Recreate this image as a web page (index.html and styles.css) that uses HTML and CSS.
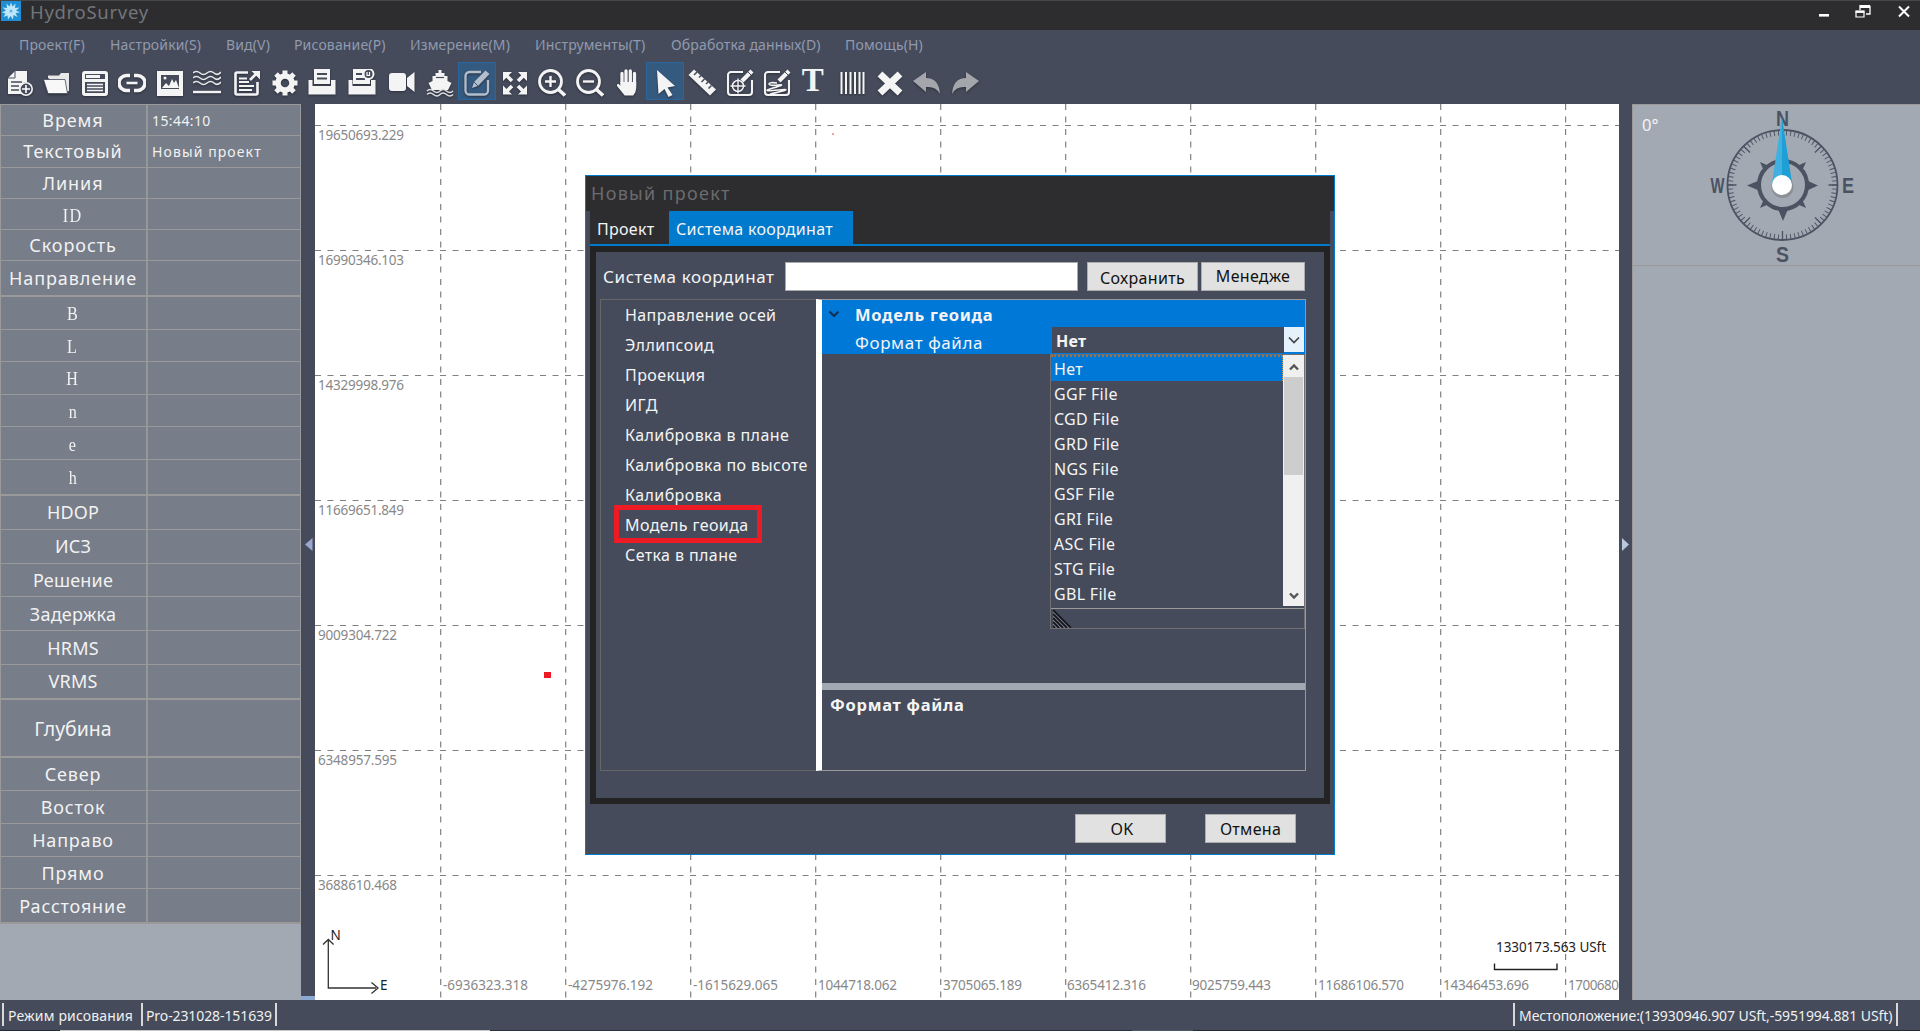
FILE: index.html
```html
<!DOCTYPE html>
<html lang="ru">
<head>
    <meta charset="UTF-8">
    <title>HydroSurvey</title>
    <link rel="stylesheet" href="styles.css">
</head>
<body>
<div class="app">

    <!-- Заголовок окна -->
    <header class="titlebar">
        <svg class="logo" viewBox="0 0 20 20">
            <rect width="20" height="20" fill="#1e8fd5"/>
            <path d="M10 1.500l1.500 4 3-3-.5 4.500 4.500-.5-3.500 3 4 2-4.500.5 2 4-4-2-.5 4.500-2.500-3.500-2.500 3.500-.5-4-4 1.500 2-3.500L1 11.500l4-2L1.500 6.500 6 7 5.500 2.500l3 3z" fill="#bfe6f9"/>
            <circle cx="10" cy="10" r="1.500" fill="#5bb8ea"/>
        </svg>
        <h1>HydroSurvey</h1>
        <svg class="win-btns" viewBox="0 0 110 30">
            <path d="M9 16.300h10" stroke="#fff" stroke-width="2.600"/>
            <path d="M50 7.500h10v7.500h-4M50 6v5" fill="none" stroke="#fff" stroke-width="1.300"/>
            <path d="M50 7.500h10" stroke="#fff" stroke-width="3"/>
            <path d="M46 13h8v5h-8z" fill="#2d2d30" stroke="#fff" stroke-width="1.200"/>
            <path d="M45.400 12.600h9.200" stroke="#fff" stroke-width="2.400"/>
            <path d="M89 7.500l10 10M99 7.500l-10 10" stroke="#fff" stroke-width="2"/>
        </svg>
    </header>

    <nav class="menu">
        <span class="m1">Проект(F)</span>
        <span class="m2">Настройки(S)</span>
        <span class="m3">Вид(V)</span>
        <span class="m4">Рисование(P)</span>
        <span class="m5">Измерение(M)</span>
        <span class="m6">Инструменты(T)</span>
        <span class="m7">Обработка данных(D)</span>
        <span class="m8">Помощь(H)</span>
    </nav>

    <!-- Панель инструментов -->
    <div class="toolbar">
        <span class="tool"><svg viewBox="0 0 28 28"><path d="M9 2h12v11a7 7 0 0 0-5 12H2V9z" fill="#f4f4f4"/><path d="M9 2v7H2" fill="none" stroke="#454b5b"/><path d="M5 13h11M5 17h8M5 21h8" stroke="#454b5b" stroke-width="1.5"/><circle cx="20" cy="20" r="6.2" fill="#454b5b" stroke="#f4f4f4" stroke-width="1.6"/><path d="M20 16v8M16 20h8" stroke="#fff" stroke-width="1.6"/></svg></span>
        <span class="tool"><svg viewBox="0 0 28 28"><path d="M5 9V6.500h11l2-2.500h8v18l-3 1z" fill="#e8e8e8"/><path d="M0.500 10.500h21.500l2.500 14H5z" fill="#f8f8f8" stroke="#454b5b" stroke-width=".8"/></svg></span>
        <span class="tool"><svg viewBox="0 0 28 28"><rect x="1" y="2" width="26" height="25" rx="3" fill="#f4f4f4"/><path d="M4 5h20v5H4zM4 13h20v11H4z" fill="#454b5b"/><path d="M5 6h14v3H5z" fill="#f4f4f4"/><path d="M6 15.500h16M6 18.500h16M6 21.500h16" stroke="#f4f4f4" stroke-width="1.700"/></svg></span>
        <span class="tool"><svg viewBox="0 0 28 28"><path d="M12 6.500H8.500a7.500 7.500 0 0 0 0 15H12M16 6.500h3.500a7.500 7.500 0 0 1 0 15H16" fill="none" stroke="#f4f4f4" stroke-width="3.600"/><path d="M8.500 14h11" stroke="#f4f4f4" stroke-width="2.600"/></svg></span>
        <span class="tool"><svg viewBox="0 0 28 28"><path d="M1 2h26v25H1z" fill="#f4f4f4"/><path d="M5 6h18v14H5z" fill="#454b5b"/><path d="M6 19l4-5 3 3 3-7 2 4 2-3 3 8z" fill="#f4f4f4"/><circle cx="9" cy="9" r="1.500" fill="#f4f4f4"/></svg></span>
        <span class="tool"><svg viewBox="0 0 28 28"><path d="M0 4q3.500-3 7 0t7 0 7 0 7-1M0 9q3.500-3 7 0t7 0 7 0 7-1M0 14q3.500-3 7 0t7 0 7 0 7-1" fill="none" stroke="#e8e8e8" stroke-width="1.600"/><path d="M0 23h28" stroke="#f4f4f4" stroke-width="2.400"/></svg></span>
        <span class="tool gap"><svg viewBox="0 0 28 28"><path d="M15 3.500H4a1.500 1.500 0 0 0-1.500 1.500v19a1.500 1.500 0 0 0 1.500 1.500h19a1.500 1.500 0 0 0 1.500-1.500V13" fill="none" stroke="#f4f4f4" stroke-width="2.600"/><path d="M6 9.500h8M6 13h10M6 17h15M6 21h13" stroke="#f4f4f4" stroke-width="1.800"/><path d="M17 11l6-6" stroke="#f4f4f4" stroke-width="2.600"/><path d="M18.500 2H27v8.500z" fill="#f4f4f4"/></svg></span>
        <span class="tool"><svg viewBox="0 0 28 28"><circle cx="14" cy="14" r="7" fill="none" stroke="#f4f4f4" stroke-width="5.500"/><path d="M14 1.500v4M14 22.500v4M1.500 14h4M22.500 14h4M5 5l3 3M20 20l3 3M23 5l-3 3M8 20l-3 3" stroke="#f4f4f4" stroke-width="5"/></svg></span>
        <span class="tool"><svg viewBox="0 0 28 28"><path d="M6 0h16v15H6z" fill="#f4f4f4"/><path d="M9 5h10M9 9.500h10" stroke="#454b5b" stroke-width="1.800"/><path d="M0.500 11h4v6h18.500v-6h4.500v14.500H0.500z" fill="#f4f4f4"/></svg></span>
        <span class="tool gap"><svg viewBox="0 0 28 28"><path d="M5 0h13v9h4v6H5z" fill="#f4f4f4"/><path d="M8 5h6M8 10h9" stroke="#454b5b" stroke-width="1.800"/><path d="M0.500 11h4v6h18.500v-6h4.500v14.500H0.500z" fill="#f4f4f4"/><circle cx="20.500" cy="5" r="5" fill="#454b5b" stroke="#f4f4f4" stroke-width="2"/><path d="M19 3v3.500h2.500V3" fill="none" stroke="#fff" stroke-width="1.200"/></svg></span>
        <span class="tool gap"><svg viewBox="0 0 28 28"><rect x="1" y="4" width="17" height="18" rx="3" fill="#f4f4f4"/><path d="M26.500 3v20l-7.500-6V9z" fill="#f4f4f4"/></svg></span>
        <span class="tool"><svg viewBox="0 0 28 28"><path d="M12.500 1h3v3h3v3h3v5l4 2-3.500 7h-16L2.500 14l4-2V7h3V4h3z" fill="#f4f4f4"/><path d="M10 8.500h8" stroke="#454b5b" stroke-width="1.200"/><path d="M1 22q3-3 6.500 0t6.500 0 6.500 0 6.500 0M1 25.500q3-3 6.500 0t6.500 0 6.500 0 6.500 0" fill="none" stroke="#e0e0e0" stroke-width="1.500"/></svg></span>
        <span class="tool active edit"><svg viewBox="0 0 28 28"><path d="M18 3H6.500a4 4 0 0 0-4 4v14.500a4 4 0 0 0 4 4H21a4 4 0 0 0 4-4V11" fill="none" stroke="#b3bfcd" stroke-width="2.300"/><path d="M9 19l2-6L22.500 1.500l4 3.500L15 17z" fill="#b3bfcd"/><path d="M11 13l4 4" stroke="#355a80"/></svg></span>
        <span class="tool expand"><svg viewBox="0 0 28 28"><path d="M5 6l6 6M23 6l-6 6M5 23l6-6M23 23l-6-6" stroke="#f4f4f4" stroke-width="3.600"/><path d="M2 3h9l-9 9zM26 3h-9l9 9zM2 25.500h9l-9-9zM26 25.500h-9l9-9z" fill="#f4f4f4"/></svg></span>
        <span class="tool"><svg viewBox="0 0 28 28" fill="none" stroke="#f4f4f4"><circle cx="12.500" cy="12.500" r="11" stroke-width="2.800"/><path d="M20.500 20.500l6.500 6" stroke-width="3.600"/><path d="M12.500 7v11M7 12.500h11" stroke-width="2.400"/></svg></span>
        <span class="tool"><svg viewBox="0 0 28 28" fill="none" stroke="#f4f4f4"><circle cx="12.500" cy="12.500" r="11" stroke-width="2.800"/><path d="M20.500 20.500l6.500 6" stroke-width="3.600"/><path d="M7 12.500h11" stroke-width="2.400"/></svg></span>
        <span class="tool"><svg viewBox="0 0 28 28"><path d="M9 4.500v12M13 2v13M17.300 2v13M21.500 4.500v12" stroke="#f4f4f4" stroke-width="3.300" stroke-linecap="round"/><path d="M7.400 13h15.800v6q0 4-3 7.500h-8.500L4 17q-.5-2.500 1.500-2l2.500 2z" fill="#f4f4f4"/></svg></span>
        <span class="tool active"><svg viewBox="0 0 28 28"><path d="M6 1l18 16-7.500 1.500L21.500 26l-4 2-4-8-6 5z" fill="#f4f4f4"/></svg></span>
        <span class="tool"><svg viewBox="0 0 28 28"><path d="M6 0.500l22 20-6 6L0.500 6z" fill="#f4f4f4"/><path d="M9 3l-3 3M13 6.500l-2 2M16.500 10l-3 3M20 13l-2 2M23.500 16.500l-3 3" stroke="#454b5b" stroke-width="1.500"/></svg></span>
        <span class="tool"><svg viewBox="0 0 28 28" fill="none" stroke="#f4f4f4"><path d="M17 3H5a3 3 0 0 0-3 3v17a3 3 0 0 0 3 3h18a3 3 0 0 0 3-3V11" stroke-width="2.100"/><circle cx="12" cy="17" r="5.500" stroke-width="1.500"/><path d="M12 9.500v15M4.500 17h15" stroke-width="1.400"/><path d="M16 12l10-10" stroke-width="4.200"/><path d="M22 3l3 3" stroke="#454b5b"/></svg></span>
        <span class="tool"><svg viewBox="0 0 28 28" fill="none" stroke="#f4f4f4"><path d="M17 3H5a3 3 0 0 0-3 3v17a3 3 0 0 0 3 3h18a3 3 0 0 0 3-3V11" stroke-width="2.100"/><path d="M14 14q-8-1-8 1t9 1-5 3 5 2-8 4" stroke-width="1.600"/><path d="M16 12l10-10" stroke-width="4.200"/><path d="M22 3l3 3" stroke="#454b5b"/></svg></span>
        <span class="tool letter">T</span>
        <span class="tool"><svg viewBox="0 0 28 28"><path d="M3.500 3v22M8 3v22M12.500 3v22M17 3v22M21.500 3v22M25.500 3v22" stroke="#f4f4f4" stroke-width="2"/></svg></span>
        <span class="tool"><svg viewBox="0 0 28 28"><path d="M4 5l20 19M24 5L4 24" stroke="#f4f4f4" stroke-width="7"/></svg></span>
        <span class="tool"><svg viewBox="0 0 28 28"><path d="M0 12L13 3v6q13 0 14 16-4-8-14-7v5z" fill="#a4a6ac"/></svg></span>
        <span class="tool"><svg viewBox="0 0 28 28"><path d="M28 12L15 3v6Q2 9 1 25q4-8 14-7v5z" fill="#a4a6ac"/></svg></span>
    </div>

    <main class="workspace">
        <!-- Таблица параметров -->
        <aside class="params">
            <div class="group g-main">
                <div class="row"><b>Время</b><i class="time">15:44:10</i></div>
                <div class="row"><b>Текстовый</b><i class="wide">Новый проект</i></div>
                <div class="row"><b>Линия</b><i></i></div>
                <div class="row"><b><span class="serif">ID</span></b><i></i></div>
                <div class="row"><b>Скорость</b><i></i></div>
                <div class="row"><b>Направление</b><i></i></div>
            </div>
            <div class="group g-pos">
                <div class="row"><b><span class="serif">B</span></b><i></i></div>
                <div class="row"><b><span class="serif">L</span></b><i></i></div>
                <div class="row"><b><span class="serif">H</span></b><i></i></div>
                <div class="row"><b><span class="serif">n</span></b><i></i></div>
                <div class="row"><b><span class="serif">e</span></b><i></i></div>
                <div class="row"><b><span class="serif">h</span></b><i></i></div>
            </div>
            <div class="group g-quality">
                <div class="row"><b>HDOP</b><i></i></div>
                <div class="row"><b>ИСЗ</b><i></i></div>
                <div class="row"><b>Решение</b><i></i></div>
                <div class="row"><b>Задержка</b><i></i></div>
                <div class="row"><b>HRMS</b><i></i></div>
                <div class="row"><b>VRMS</b><i></i></div>
            </div>
            <div class="group g-depth">
                <div class="row"><b>Глубина</b><i></i></div>
            </div>
            <div class="group g-coords">
                <div class="row"><b>Север</b><i></i></div>
                <div class="row"><b>Восток</b><i></i></div>
                <div class="row"><b>Направо</b><i></i></div>
                <div class="row"><b>Прямо</b><i></i></div>
                <div class="row"><b>Расстояние</b><i></i></div>
            </div>
        </aside>

        <div class="splitter left"><svg viewBox="0 0 14 14"><path d="M11.500 0v13L4 6.500z" fill="#9aa6cc"/></svg></div>

        <!-- Карта -->
        <section class="map">
            <svg class="grid" viewBox="315 104 1304 896">
                <g stroke="#808080" stroke-width="1.200" stroke-dasharray="6 6.500">
                    <path d="M315 125.500h1304M315 250.500h1304M315 375.500h1304M315 500.500h1304M315 625.500h1304M315 750.500h1304M315 875.500h1304"/>
                    <path d="M440.700 104v896M565.700 104v896M690.700 104v896M815.700 104v896M940.700 104v896M1065.700 104v896M1190.700 104v896M1315.700 104v896M1440.700 104v896M1565.600 104v896"/>
                </g>
                <g class="coord">
                    <text x="318" y="140" textLength="86">19650693.229</text>
                    <text x="318" y="265" textLength="86">16990346.103</text>
                    <text x="318" y="390" textLength="86">14329998.976</text>
                    <text x="318" y="515" textLength="86">11669651.849</text>
                    <text x="318" y="640" textLength="79">9009304.722</text>
                    <text x="318" y="765" textLength="79">6348957.595</text>
                    <text x="318" y="890" textLength="79">3688610.468</text>
                    <text x="443" y="990" textLength="85">-6936323.318</text>
                    <text x="568" y="990" textLength="85">-4275976.192</text>
                    <text x="693" y="990" textLength="85">-1615629.065</text>
                    <text x="818" y="990" textLength="79">1044718.062</text>
                    <text x="943" y="990" textLength="79">3705065.189</text>
                    <text x="1067" y="990" textLength="79">6365412.316</text>
                    <text x="1192" y="990" textLength="79">9025759.443</text>
                    <text x="1318" y="990" textLength="86">11686106.570</text>
                    <text x="1443" y="990" textLength="86">14346453.696</text>
                    <text x="1568" y="990" textLength="51">1700680</text>
                </g>
                <path d="M328.300 940v48H376M323 944.500l5.300-5 5.300 5M371.500 982.500l6.500 5.500-6.500 5.500" fill="none" stroke="#333" stroke-width="1.300"/>
                <g class="axis">
                    <text x="330.500" y="940">N</text>
                    <text x="380" y="990">E</text>
                    <text x="1496" y="952" textLength="110">1330173.563 USft</text>
                </g>
                <path d="M1494.500 963.500v6h62.500v-6" fill="none" stroke="#222" stroke-width="1.400"/>
                <path d="M544 672h7v6h-7z" fill="#ed1c24"/>
                <path d="M832 133.500h2v1h-2z" fill="#f04040"/>
            </svg>

            <!-- Окно нового проекта -->
            <div class="dialog">
                <div class="dialog-title">Новый проект</div>
                <div class="tabs">
                    <span class="tab">Проект</span>
                    <span class="tab current">Система координат</span>
                </div>
                <div class="page">
                    <div class="system">
                        <label>Система координат</label>
                        <div class="field"></div>
                        <div class="btn save">Сохранить</div>
                        <div class="btn manage">Менедже</div>
                    </div>
                    <div class="panes">
                        <ul class="tree">
                            <li>Направление осей</li>
                            <li>Эллипсоид</li>
                            <li>Проекция</li>
                            <li>ИГД</li>
                            <li>Калибровка в плане</li>
                            <li>Калибровка по высоте</li>
                            <li>Калибровка</li>
                            <li class="marked">Модель геоида</li>
                            <li>Сетка в плане</li>
                        </ul>
                        <div class="props">
                            <div class="prop-head"><svg viewBox="0 0 12 8"><path d="M1.500 1.500L6 6l4.500-4.500" fill="none" stroke="#12304f" stroke-width="2"/></svg>Модель геоида</div>
                            <div class="prop-row">
                                <div class="prop-name">Формат файла</div>
                                <div class="prop-value">Нет</div>
                                <div class="combo"><svg viewBox="0 0 12 8"><path d="M1 1.500l5 5 5-5" fill="none" stroke="#444" stroke-width="1.700"/></svg></div>
                            </div>
                            <div class="prop-space"></div>
                            <div class="prop-help">Формат файла</div>
                            <div class="dropdown">
                                <div class="options">
                                    <div class="list">
                                        <div class="option selected">Нет</div>
                                        <div class="option">GGF File</div>
                                        <div class="option">CGD File</div>
                                        <div class="option">GRD File</div>
                                        <div class="option">NGS File</div>
                                        <div class="option">GSF File</div>
                                        <div class="option">GRI File</div>
                                        <div class="option">ASC File</div>
                                        <div class="option">STG File</div>
                                        <div class="option">GBL File</div>
                                    </div>
                                    <div class="scroll">
                                        <svg viewBox="0 0 12 8"><path d="M2 6.500L6 2.500l4 4" fill="none" stroke="#555" stroke-width="2.400"/></svg>
                                        <div class="thumb"></div>
                                        <svg viewBox="0 0 12 8"><path d="M2 1.500l4 4 4-4" fill="none" stroke="#555" stroke-width="2.400"/></svg>
                                    </div>
                                </div>
                                <div class="grip"><svg viewBox="0 0 19 19"><path d="M0 0L19 19H0z" fill="#777d8b"/><path d="M0 1l18 18M0 5l14 14M0 9l10 10M0 13l6 6M0 17l2 2" stroke="#14161c" stroke-width="1.800"/></svg></div>
                            </div>
                        </div>
                    </div>
                </div>
                <div class="dialog-btns">
                    <div class="btn ok">OK</div>
                    <div class="btn">Отмена</div>
                </div>
            </div>
        </section>

        <div class="splitter right"><svg viewBox="0 0 14 14"><path d="M3 0v13l7-6.500z" fill="#b9c6dc"/></svg></div>

        <!-- Компас -->
        <aside class="nav-panel">
            <div class="compass">
                <span class="angle">0°</span>
                <svg viewBox="1702 105 160 160">
                    <g fill="none" stroke="#4b5363">
                        <circle cx="1782.500" cy="185" r="55" stroke-width="1.800"/>
                        <circle cx="1782.500" cy="185" r="52" stroke-width="5" pathLength="360" stroke-dasharray="1 3.500" stroke-dashoffset=".5"/>
                        <path d="M1727.500 185h9M1828.500 185h9M1782.500 231v9M1743.600 146.100l6.400 6.400M1821.400 146.100l-6.400 6.400M1743.600 223.900l6.400-6.400M1821.400 223.900l-6.400-6.400" stroke-width="1.300"/>
                        <circle cx="1783" cy="185" r="24" stroke-width="4"/>
                    </g>
                    <path d="M1747 185.500l12-5v10zM1818 185.500l-11-5v10zM1783 221l-5-12h10zM1760 162l9 4-5 5zM1806 162l-9 4 5 5zM1760 208l9-4-5-5zM1806 208l-9-4 5-5z" fill="#4b5363"/>
                    <g class="cardinal">
                        <text x="1776" y="125.500" textLength="13" lengthAdjust="spacingAndGlyphs">N</text>
                        <text x="1776" y="261.500" textLength="13" lengthAdjust="spacingAndGlyphs">S</text>
                        <text x="1710.500" y="192.500" textLength="14" lengthAdjust="spacingAndGlyphs">W</text>
                        <text x="1842" y="192.500" textLength="12" lengthAdjust="spacingAndGlyphs">E</text>
                    </g>
                    <path d="M1782 117l-10 66h10z" fill="#3fb0e0"/>
                    <path d="M1782 117l10 66h-10z" fill="#1e9fd6"/>
                    <circle cx="1782.500" cy="187" r="11" fill="#555" opacity=".3"/>
                    <circle cx="1782" cy="185" r="10" fill="#fff"/>
                </svg>
            </div>
        </aside>
    </main>

    <footer class="status">
        <span class="mode">Режим рисования</span>
        <span class="project">Pro-231028-151639</span>
        <span class="place">Местоположение:(13930946.907 USft,-5951994.881 USft)</span>
    </footer>
    <div class="taskbar"></div>
</div>
</body>
</html>
```
FILE: styles.css
```css
* {
    box-sizing: border-box;
}

body {
    margin: 0;
    background: #454b5b;
    font-family: "Noto Sans", "Open Sans", sans-serif;
    overflow: hidden;
}

.app {
    display: flex;
    flex-direction: column;
    width: 1920px;
    height: 1031px;
}

svg {
    display: block;
    flex: none;
}

/* заголовок */
.titlebar {
    display: flex;
    height: 30px;
    background: #2d2d30;
    border-top: 1px solid #46474b;
}

.logo {
    width: 20px;
    height: 20px;
    margin-left: 1px;
}

.titlebar h1 {
    margin: 0 auto 0 9px;
    color: #73757a;
    font-size: 18.5px;
    font-weight: normal;
    letter-spacing: .7px;
    line-height: 22px;
}

.win-btns {
    width: 110px;
    height: 30px;
    margin-top: -2px;
}

.menu {
    display: flex;
    height: 32px;
    color: #919aae;
    font-size: 14px;
    letter-spacing: .15px;
    line-height: 29px;
    padding-left: 19px;
    white-space: nowrap;
}

.m1 { width: 91px; }
.m2 { width: 116px; }
.m3 { width: 68px; }
.m4 { width: 116px; }
.m5 { width: 125px; }
.m6 { width: 136px; }
.m7 { width: 174px; }

.toolbar {
    display: flex;
    height: 42px;
    padding-left: 1px;
}

.tool {
    display: flex;
    flex: none;
    align-items: center;
    justify-content: center;
    width: 37.5px;
    height: 38px;
    padding-top: 3px;
}

.tool svg {
    width: 28px;
    height: 28px;
    filter: drop-shadow(0 1px 1px #2a2e39);
}

.tool.gap {
    margin-left: 2.5px;
}

.tool.edit {
    margin-left: -.5px;
}

.tool.expand {
    margin-left: .5px;
}

.tool.active {
    background: #355a80;
    border: 1px solid #2a659c;
}

.tool.letter {
    color: #f4f4f4;
    font: bold 33px/34px "Liberation Serif", serif;
    padding: 0 4px 2px 0;
}

.workspace {
    display: flex;
    height: 896px;
}

/* таблица слева */
.params {
    width: 301px;
    background: #a3a9b3;
    border-top: 1px solid #999;
}

.group {
    border-bottom: 1px solid #999;
}

.row {
    display: flex;
    height: 31.3px;
    background: #777d89;
    border: 1px solid #999;
    border-top: 0;
    color: #f2f2f2;
}

.row b {
    display: flex;
    align-items: center;
    justify-content: center;
    width: 147px;
    border-right: 2px solid #949699;
    font-size: 18px;
    font-weight: normal;
    padding-right: 1px;
}

.row i {
    display: flex;
    align-items: center;
    padding: 1px 0 0 4px;
    font-size: 14px;
    font-style: normal;
}

.row .time {
    padding-top: 0;
    letter-spacing: .4px;
}

.row .wide {
    letter-spacing: 1.1px;
}

.serif {
    font: 19px "Liberation Serif", serif;
    letter-spacing: 1.5px;
    margin-top: 3px;
    transform: scaleX(.85);
}

.g-main b { letter-spacing: .9px; }
.g-main .row:last-child { height: 34.5px; }
.g-pos .row { height: 32.6px; }
.g-pos .row:last-child { height: 35px; }
.g-quality b { letter-spacing: .2px; }
.g-quality .row { height: 33.8px; }
.g-depth .row { height: 57.5px; }
.g-depth b { font-size: 19.500px; padding-top: 1px; }
.g-coords b { letter-spacing: .8px; }
.g-coords .row { height: 32.8px; }
.g-coords .row:last-child { height: 34px; }

.splitter {
    display: flex;
    align-items: center;
    width: 14px;
    background: #454b5b;
}

.splitter.left {
    border-bottom: 4px solid #8ba9d2;
}

.splitter.right {
    width: 13px;
}

.splitter svg {
    width: 14px;
    height: 14px;
    margin-bottom: 15px;
}

.splitter.left svg {
    margin-bottom: 11px;
}

/* карта */
.map {
    position: relative;
    width: 1304px;
    background: #fff;
}

.grid {
    width: 1304px;
    height: 896px;
}

.coord {
    font-size: 13.5px;
    fill: #888;
}

.axis {
    font-size: 13.5px;
    fill: #222;
}

/* правая панель */
.nav-panel {
    width: 288px;
    background: #a3a9b3;
    border-top: 1px solid #999;
    border-left: 1px solid #999;
}

.compass {
    display: flex;
    height: 161px;
    border-bottom: 1px solid #999;
}

.compass svg {
    width: 160px;
    height: 160px;
    margin-top: -.5px;
}

.angle {
    width: 68.5px;
    padding: 8px 0 0 9px;
    color: #f4f4f4;
    font-size: 16.5px;
}

.cardinal {
    font: bold 21.5px "Liberation Sans", sans-serif;
    fill: #4b5363;
}

/* окно */
.dialog {
    position: absolute;
    left: 270px;
    top: 71px;
    display: flex;
    flex-direction: column;
    width: 750px;
    height: 680px;
    background: #454b5b;
    border: 1px solid #007acc;
    color: #f4f4f4;
    font-size: 16px;
    letter-spacing: .3px;
    white-space: nowrap;
}

.dialog-title {
    height: 35px;
    padding-left: 5px;
    background: #2d2d30;
    color: #6b6b6d;
    font-size: 18px;
    letter-spacing: 1.3px;
    line-height: 34px;
}

.tabs {
    display: flex;
    height: 35px;
    margin: 0 4px;
    background: #2d2d30;
    border-bottom: 2px solid #007acc;
    line-height: 36px;
}

.tab {
    width: 79px;
    padding-left: 7px;
}

.tab.current {
    width: 184px;
    background: #007acc;
}

.page {
    height: 558px;
    margin: 0 4px;
    padding: 10px 18px 0 4px;
    border: 6px solid #232323;
}

.system {
    display: flex;
    height: 37px;
    line-height: 30px;
}

.system label {
    width: 185px;
    padding-left: 3px;
    font-size: 17px;
    letter-spacing: .6px;
}

.field {
    width: 293px;
    height: 29px;
    margin-right: 9px;
    background: #fff;
    border: 1px solid #aaa;
}

.btn {
    height: 29px;
    background: #e1e1e1;
    border: 1px solid #adadad;
    color: #111;
    line-height: 30px;
    text-align: center;
}

.save {
    width: 111px;
    margin-right: 3px;
}

.manage {
    width: 104px;
    line-height: 27px;
}

.panes {
    display: flex;
    height: 472px;
}

.tree {
    width: 216px;
    margin: 0;
    padding: 0 0 0 24px;
    border: 1px solid #666;
    border-right: 0;
    list-style: none;
    letter-spacing: .4px;
    line-height: 31px;
}

.tree li {
    height: 30px;
}

.tree .marked {
    width: 138px;
    height: 28px;
    margin: 0 0 2px -6px;
    padding-left: 6px;
    outline: 5px solid #ed1c24;
}

.props {
    position: relative;
    display: flex;
    flex-direction: column;
    flex: 1;
    border: 1px solid #999;
    border-left: 6px solid #fff;
}

.prop-head {
    display: flex;
    height: 27px;
    background: #0078d7;
    font-size: 16.5px;
    font-weight: bold;
    letter-spacing: .7px;
    line-height: 30px;
}

.prop-head svg {
    width: 12px;
    height: 8px;
    margin: 10px 15px 0 6px;
}

.prop-row {
    display: flex;
    height: 27px;
    background: #0078d7;
    line-height: 29px;
}

.prop-name {
    width: 230px;
    padding-left: 33px;
    font-size: 17px;
    letter-spacing: .6px;
    line-height: 31px;
}

.prop-value {
    width: 232px;
    height: 26px;
    padding-left: 4px;
    background: #454b5b;
    font-weight: bold;
}

.combo {
    display: flex;
    align-items: center;
    justify-content: center;
    width: 20px;
    height: 25px;
    background: #e5f1fb;
}

.combo svg,
.scroll svg {
    width: 12px;
    height: 8px;
}

.prop-space {
    flex: 1;
}

.prop-help {
    height: 87px;
    padding-left: 8px;
    border-top: 7px solid #a3a9b3;
    font-size: 16.5px;
    font-weight: bold;
    letter-spacing: .7px;
    line-height: 30px;
}

.dropdown {
    position: absolute;
    left: 228px;
    top: 54px;
    width: 255px;
    height: 275px;
    background: #454b5b;
    border: 1px solid #707070;
}

.options {
    display: flex;
    height: 254px;
    border-bottom: 1px solid #999;
}

.list {
    flex: 1;
}

.option {
    height: 25px;
    padding-left: 3px;
    line-height: 27px;
}

.option.selected {
    height: 26px;
    background: #0078d7;
    border-top: 2px dotted #a8703c;
    border-right: 1px dotted #d89050;
    line-height: 25px;
}

.scroll {
    display: flex;
    flex-direction: column;
    align-items: center;
    width: 21px;
    height: 251px;
    padding: 8px 0 6px;
    background: #f0f0f0;
}

.thumb {
    width: 19px;
    height: 98px;
    margin: 6px 0 auto;
    background: #cdcdcd;
}

.grip svg {
    width: 19px;
    height: 19px;
    margin-left: 2px;
}

.dialog-btns {
    display: flex;
    justify-content: flex-end;
    gap: 39px;
    padding: 10px 38px 0 0;
}

.dialog-btns .btn {
    width: 91px;
    line-height: 29px;
}

.dialog-btns .ok {
    padding-left: 3px;
}

/* строка состояния */
.status {
    display: flex;
    height: 30px;
    padding: 3px 22px 4px 2px;
    color: #f0f0f0;
    font-size: 14px;
    line-height: 25px;
    white-space: nowrap;
}

.mode,
.project,
.place {
    border-left: 2px solid #d8d8d8;
    padding-left: 4px;
}

.mode {
    width: 139px;
    letter-spacing: .15px;
}

.project {
    width: 136px;
    padding-left: 3px;
    border-right: 2px solid #d8d8d8;
    letter-spacing: -.1px;
}

.place {
    width: 385px;
    margin-left: auto;
    border-right: 2px solid #d8d8d8;
    letter-spacing: -.07px;
}

.taskbar {
    height: 1px;
    background: linear-gradient(90deg, #222b38 60px, #c8c8c8 60px, #c8c8c8 490px, #26323d 490px, #26323d 1132px, #4a5a62 1132px, #4a5a62 1193px, #222b34 1193px);
}
```
